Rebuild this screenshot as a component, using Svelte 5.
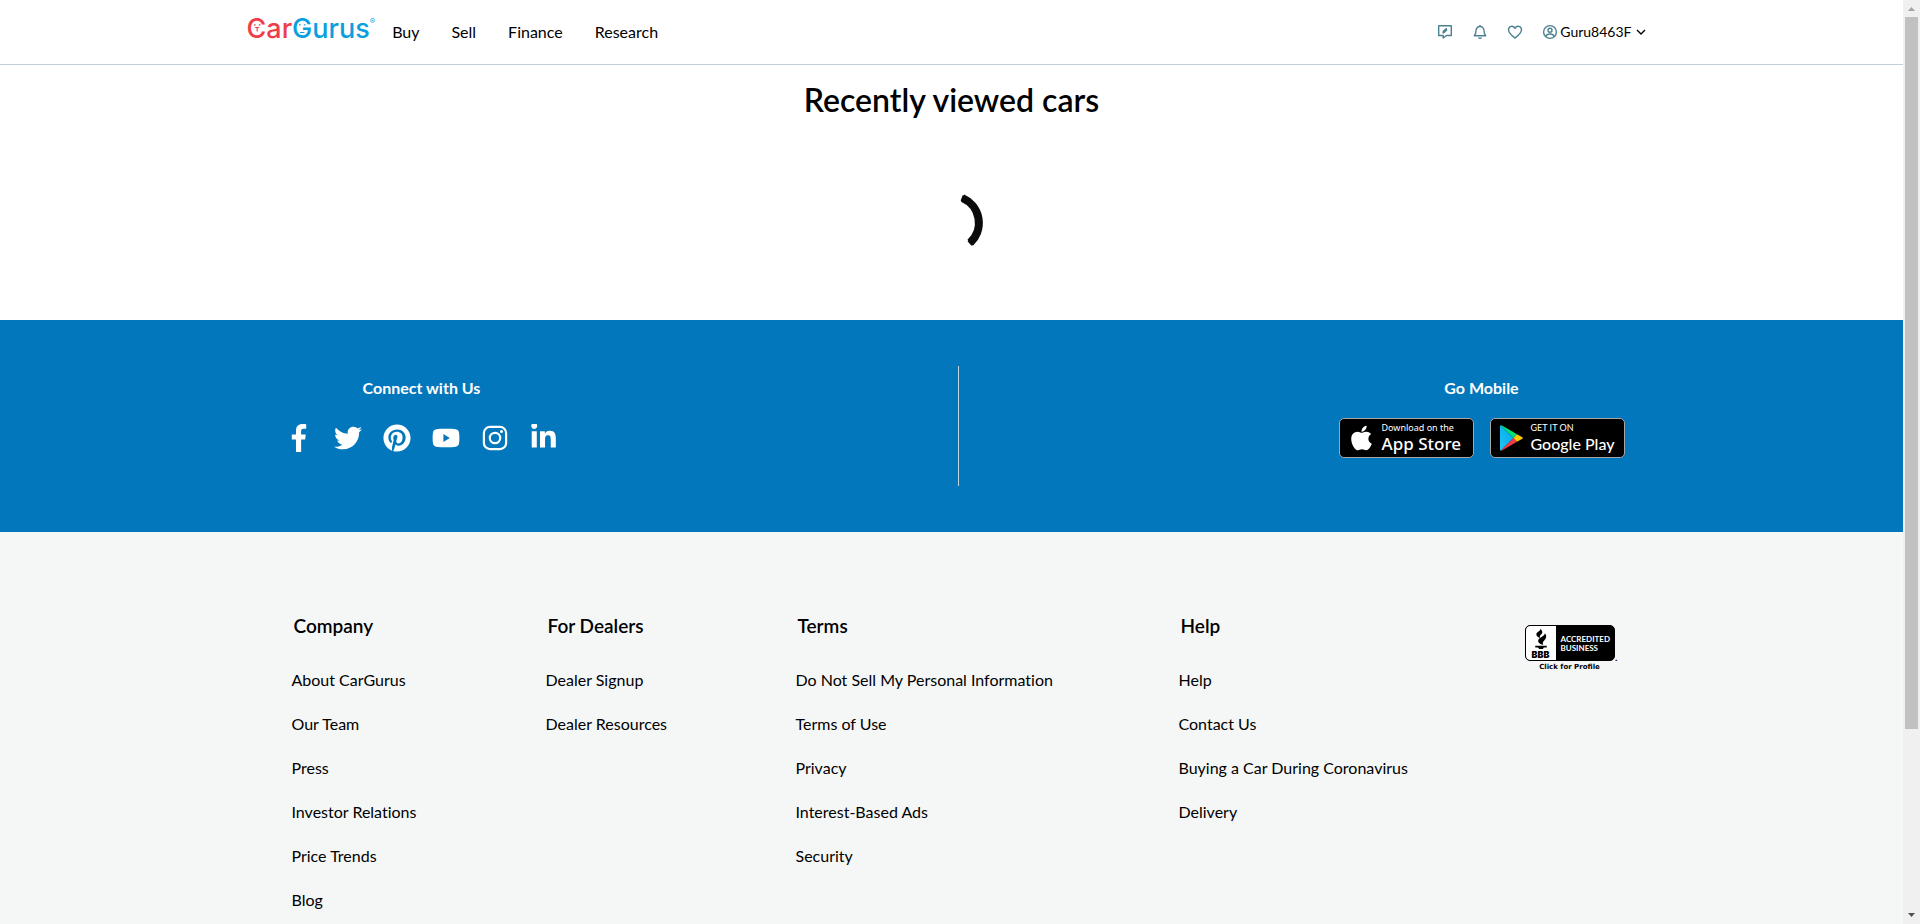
<script>
  const nav = ['Buy', 'Sell', 'Finance', 'Research'];

  const columns = [
    { title: 'Company', links: ['About CarGurus', 'Our Team', 'Press', 'Investor Relations', 'Price Trends', 'Blog'] },
    { title: 'For Dealers', links: ['Dealer Signup', 'Dealer Resources'] },
    { title: 'Terms', links: ['Do Not Sell My Personal Information', 'Terms of Use', 'Privacy', 'Interest-Based Ads', 'Security'] },
    { title: 'Help', links: ['Help', 'Contact Us', 'Buying a Car During Coronavirus', 'Delivery'] }
  ];

  const socials = [
    { name: 'Facebook', box: '-124 0 512 512', size: 28, d: 'M215.8 85H264V3.6C255.7 2.5 227.1 0 193.8 0 124.3 0 76.7 42.4 76.7 120.3V192H0v91h76.7v229h94V283h73.6l11.7-91h-85.3v-62.7c0-26.3 7.3-44.3 45.1-44.3z' },
    { name: 'Twitter', box: '0 0 512 512', size: 28, d: 'M459.37 151.716c.325 4.548.325 9.097.325 13.645 0 138.72-105.583 298.558-298.558 298.558-59.452 0-114.68-17.219-161.137-47.106 8.447.974 16.568 1.299 25.34 1.299 49.055 0 94.213-16.568 130.274-44.832-46.132-.975-84.792-31.188-98.112-72.772 6.498.974 12.995 1.624 19.818 1.624 9.421 0 18.843-1.3 27.614-3.573-48.081-9.747-84.143-51.98-84.143-102.985v-1.299c13.969 7.797 30.214 12.67 47.431 13.319-28.264-18.843-46.781-51.005-46.781-87.391 0-19.492 5.197-37.36 14.294-52.954 51.655 63.675 129.3 105.258 216.365 109.807-1.624-7.797-2.599-15.918-2.599-24.04 0-57.828 46.782-104.934 104.934-104.934 30.213 0 57.502 12.67 76.67 33.137 23.715-4.548 46.456-13.32 66.599-25.34-7.798 24.366-24.366 44.833-46.132 57.827 21.117-2.273 41.584-8.122 60.426-16.243-14.292 20.791-32.161 39.308-52.628 54.253z' },
    { name: 'Pinterest', box: '-8 0 512 512', size: 28, d: 'M496 256c0 137-111 248-248 248-25.6 0-50.2-3.9-73.4-11.1 10.1-16.5 25.2-43.5 30.8-65 3-11.6 15.4-59 15.4-59 8.1 15.4 31.7 28.5 56.8 28.5 74.8 0 128.7-68.8 128.7-154.3 0-81.9-66.9-143.2-152.9-143.2-107 0-163.9 71.8-163.9 150.1 0 36.4 19.4 81.7 50.3 96.1 4.7 2.2 7.2 1.2 8.3-3.3.8-3.4 5-20.3 6.9-28.1.6-2.5.3-4.7-1.7-7.1-10.1-12.5-18.3-35.3-18.3-56.6 0-54.7 41.4-107.6 112-107.6 60.9 0 103.6 41.5 103.6 100.9 0 67.1-33.9 113.6-78 113.6-24.3 0-42.6-20.1-36.7-44.8 7-29.5 20.5-61.3 20.5-82.6 0-19-10.2-34.9-31.4-34.9-24.9 0-44.9 25.7-44.9 60.2 0 22 7.4 36.8 7.4 36.8s-24.5 103.8-29 123.2c-5 21.4-3 51.6-.9 71.2C65.4 450.9 0 361.1 0 256 0 119 111 8 248 8s248 111 248 248z' },
    { name: 'YouTube', box: '0 0 28 28', size: 28, d: 'M14 4.800c4 0 7.600.1 9.700.5 2 .3 3 1.500 3.300 3.200.3 1.600.4 3.500.4 5.500s-.1 3.900-.4 5.500c-.3 1.700-1.300 2.900-3.300 3.200-2.100.4-5.700.5-9.700.5s-7.600-.1-9.700-.5c-2-.3-3-1.500-3.300-3.200C.7 17.900.6 16 .6 14s.1-3.900.4-5.500c.3-1.700 1.300-2.900 3.300-3.200C6.400 4.900 10 4.800 14 4.800zM11.400 10v8l6.400-4z' },
    { name: 'Instagram', box: '0 0 28 28', size: 28, d: 'M9 1.800h10a7.200 7.200 0 0 1 7.200 7.200v10a7.200 7.200 0 0 1-7.200 7.200H9A7.200 7.200 0 0 1 1.800 19V9A7.200 7.200 0 0 1 9 1.800zM9 4A5 5 0 0 0 4 9v10a5 5 0 0 0 5 5h10a5 5 0 0 0 5-5V9a5 5 0 0 0-5-5zM14 7.700a6.300 6.300 0 1 1 0 12.600 6.300 6.300 0 0 1 0-12.600zM14 9.900a4.100 4.100 0 1 0 0 8.200 4.100 4.100 0 0 0 0-8.200zM20.500 6a1.500 1.500 0 1 1 0 3 1.500 1.500 0 0 1 0-3z' },
    { name: 'LinkedIn', box: '-24 18 512 512', size: 28, d: 'M100.28 448H7.400V148.900h92.880zM53.790 108.100C24.090 108.100 0 83.500 0 53.800a53.790 53.790 0 0 1 107.580 0c0 29.700-24.100 54.300-53.790 54.300zM447.900 448h-92.680V302.400c0-34.700-.7-79.200-48.290-79.200-48.290 0-55.690 37.700-55.690 76.700V448h-92.780V148.900h89.080v40.800h1.300c12.400-23.500 42.690-48.300 87.880-48.300 94 0 111.280 61.900 111.280 142.300V448z' }
  ];
</script>

<div class="window">
  <div class="page">
    <header>
      <div class="bar">
        <a class="logo" href="#home" aria-label="CarGurus">
          <span class="red"><span class="face">C<svg viewBox="0 0 20 20" aria-hidden="true"><path d="M7 6.800h1.600M11.800 6.800h1.600M8.200 9.500h4M10.200 9.500v4" /></svg></span>ar</span><span class="blue"><span class="face">G<svg viewBox="0 0 20 20" aria-hidden="true"><path d="M7 6.800h1.600M11.800 6.800h1.600M8 14.500h4.500" /></svg></span>urus</span><sup>®</sup>
        </a>
        <nav>
          {#each nav as item}
            <a href="#{item.toLowerCase()}">{item}</a>
          {/each}
        </nav>
        <div class="tools">
          <button aria-label="Messages">
            <svg viewBox="0 0 16 16"><path d="M1.700 1.700h12.600v9.800H9.500L6.200 14v-2.500H1.700z" /><path d="M6 8.700l.4-1.500 3.300-3M5.600 9.200l1.500-.8 3-3" /></svg>
          </button>
          <button aria-label="Notifications">
            <svg viewBox="0 0 16 16"><path d="M2.300 11.800c1.400-1.200 1.700-2.400 1.700-5C4 4.400 5.700 2.500 8 2.500s4 1.900 4 4.300c0 2.600.3 3.800 1.700 5z" /><path d="M8 1v1.500M6.600 13.500c.4 1.100 2.400 1.100 2.800 0" /></svg>
          </button>
          <button aria-label="Saved cars">
            <svg viewBox="0 0 16 16"><path d="M8 14C5.500 12 1.500 9.300 1.500 5.800 1.500 2.200 6 .9 8 4.300c2-3.400 6.500-2.100 6.500 1.500C14.500 9.300 10.500 12 8 14z" /></svg>
          </button>
          <button class="account">
            <svg viewBox="0 0 16 16"><circle cx="8" cy="8" r="6.400" /><circle cx="8" cy="6.300" r="2" /><path d="M3.900 12.600c.4-1.900 1.500-2.600 4.100-2.600s3.700.7 4.100 2.600" /></svg>
            <span>Guru8463F</span>
            <svg class="chevron" viewBox="0 0 10 10"><path d="M1 3l4 4 4-4" /></svg>
          </button>
        </div>
      </div>
    </header>

    <main>
      <h1>Recently viewed cars</h1>
      <svg class="spinner" viewBox="0 0 64 64" role="img" aria-label="Loading">
        <path d="M41.700 6.800A27 27 0 0 1 49.500 52.500" stroke-width="6" />
        <path d="M42.600 7.200A27 27 0 0 1 50.200 51.800" stroke-width="8" />
      </svg>
    </main>

    <section class="connect">
      <div class="row">
        <div class="social">
          <h2>Connect with Us</h2>
          <ul>
            {#each socials as s}
              <li><a href="#{s.name.toLowerCase()}" aria-label={s.name}><svg viewBox={s.box} width={s.size} height={s.size}><path fill-rule="evenodd" d={s.d} /></svg></a></li>
            {/each}
          </ul>
        </div>
        <div class="divider"></div>
        <div class="mobile">
          <h2>Go Mobile</h2>
          <div class="stores">
            <a class="store apple" href="#app-store">
              <svg viewBox="0 20 384 470"><path fill="#fff" d="M318.700 268.700c-.2-36.700 16.400-64.400 50-84.800-18.800-26.900-47.200-41.700-84.700-44.600-35.500-2.800-74.300 20.700-88.500 20.700-15 0-49.400-19.700-76.400-19.700C63.300 141.200 4 184.800 4 273.500q0 39.300 14.400 81.200c12.800 36.700 59 126.700 107.200 125.200 25.200-.6 43-17.900 75.800-17.900 31.800 0 48.300 17.900 76.400 17.900 48.600-.7 90.400-82.500 102.600-119.300-65.200-30.700-61.700-90-61.700-91.900zm-56.600-164.200c27.300-32.400 24.800-61.900 24-72.500-24.100 1.400-52 16.400-67.900 34.900-17.500 19.800-27.800 44.300-25.600 71.900 26.100 2 49.900-11.400 69.500-34.300z" /></svg>
              <span><small>Download on the</small><b>App Store</b></span>
            </a>
            <a class="store google" href="#google-play">
              <svg viewBox="0 0 23 26">
                <defs><linearGradient id="play" x1="0" y1="1" x2="1" y2="0"><stop offset="0" stop-color="#1fc8f8" /><stop offset="1" stop-color="#00a3e8" /></linearGradient></defs>
                <path fill="url(#play)" d="M.7.300L13.500 13 .7 25.700Q0 25.500 0 24.500v-23Q0 .5.700.3z" />
                <path fill="#00e474" d="M.7.300q.6-.2 1.300.2L17 9.200 13.500 13z" />
                <path fill="#f53b48" d="M.7 25.700q.6.200 1.300-.2L17 16.800 13.500 13z" />
                <path fill="#ffc900" d="M17 9.200l5.300 3q1.200.8 0 1.600l-5.300 3L13.500 13z" />
              </svg>
              <span><small>GET IT ON</small><b>Google Play</b></span>
            </a>
          </div>
        </div>
      </div>
    </section>

    <footer>
      <div class="columns">
        {#each columns as col}
          <div>
            <h3>{col.title}</h3>
            <ul>
              {#each col.links as link}
                <li><a href="#{link.toLowerCase().replaceAll(' ', '-')}">{link}</a></li>
              {/each}
            </ul>
          </div>
        {/each}
        <a class="bbb" href="#bbb">
          <span class="seal">
            <span class="mark">
              <svg viewBox="0 0 14 22" aria-hidden="true"><path d="M6.500 0c2.600 2.500 2.200 4.200.6 5.800-1.400 1.300-1.700 2.200-.9 3.700C3.400 8.600 1.600 7 2.200 4.800 2.800 3 6 2.500 6.500 0zM11 4.500c2.300 2.600 1.700 5-.2 6.900-1.700 1.700-2.600 2.900-1.400 5.100-3.800-.5-6.200-2.900-5.100-5.300C5.500 8.700 10.700 8 11 4.500zM1 17.500h12v2h-3l-1 1.500H5l-1-1.500H1z" /></svg>
              <b>BBB</b>
            </span>
            <span class="label">ACCREDITED<br />BUSINESS</span>
          </span>
          <i>.</i>
          <span class="caption">Click for Profile</span>
        </a>
      </div>
    </footer>
  </div>

  <div class="scrollbar" aria-hidden="true">
    <svg viewBox="0 0 17 17"><path fill="#a3a3a3" d="M8.500 7l3.500 4H5z" /></svg>
    <div class="track"><div class="thumb"></div></div>
    <svg viewBox="0 0 17 17"><path fill="#505050" d="M8.500 10L12 6H5z" /></svg>
  </div>
</div>

<style>
  :global(body) { margin: 0; }
  .window {
    display: grid;
    grid-template-columns: minmax(0, 1fr) 17px;
    height: 100vh;
    overflow: hidden;
    font: 16px/24px Lato, sans-serif;
    font-variant-ligatures: none;
    color: #000;
    background: #fff;
  }
  .page { display: flex; flex-direction: column; overflow: hidden; }
  a { color: inherit; text-decoration: none; }
  ul { list-style: none; margin: 0; padding: 0; }
  h1, h2, h3 { margin: 0; }
  svg { display: block; }

  header { border-bottom: 1px solid #c1cfd9; }
  .bar {
    display: flex;
    align-items: center;
    box-sizing: border-box;
    max-width: 1410px;
    height: 64px;
    margin: 0 auto;
    padding-right: 11px;
  }
  .logo {
    display: flex;
    font: 500 27px/28px Inter, sans-serif;
    padding-bottom: 6px;
  }
  .red { color: #ef3e4a; }
  .blue { color: #0aa0dd; }
  .face { position: relative; }
  .face svg {
    position: absolute;
    left: 0;
    top: 6px;
    width: 20px;
    height: 20px;
    fill: none;
    stroke: currentColor;
    stroke-width: 1.200;
  }
  .logo sup { font: 8px/12px Inter, sans-serif; color: #0aa0dd; }
  nav { display: flex; gap: 32px; margin-left: 17px; }
  .tools { display: flex; align-items: center; gap: 19px; margin-left: auto; }
  button {
    display: flex;
    align-items: center;
    border: 0;
    padding: 0;
    background: none;
    color: #4e8190;
    font: 14px/20px Lato, sans-serif;
  }
  button svg {
    width: 16px;
    height: 16px;
    fill: none;
    stroke: currentColor;
    stroke-width: 1.400;
    stroke-linejoin: round;
  }
  .account { gap: 2px; }
  .account span { color: #000; }
  .account .chevron { width: 10px; height: 10px; margin-left: 2px; color: #000; }

  main { display: flex; flex-direction: column; align-items: center; padding: 15px 0 65px; }
  h1 { font-size: 32px; line-height: 40px; font-weight: 600; }
  .spinner { width: 64px; height: 64px; margin-top: 71px; fill: none; stroke: #0b0b0b; }

  .connect { background: #0277bc; color: #fff; padding: 46px 0; }
  .row { display: flex; justify-content: space-between; max-width: 1354px; margin: 0 auto; }
  .divider { width: 1px; height: 120px; background: #c3d3df; }
  .connect h2 { font-size: 16px; line-height: 24px; font-weight: 700; text-align: center; }
  .social, .mobile { width: 294px; padding-top: 10px; }
  .social { padding-right: 14px; }
  .social ul { display: flex; justify-content: space-around; margin-top: 24px; fill: #fff; }
  .stores { display: flex; justify-content: center; gap: 16px; margin-top: 18px; }
  .store {
    display: flex;
    align-items: center;
    box-sizing: border-box;
    width: 135px;
    height: 40px;
    border: 1px solid #a6a6a6;
    border-radius: 5px;
    background: #000;
  }
  .store span { display: flex; flex-direction: column; white-space: nowrap; }
  .apple { padding-left: 11px; gap: 10px; font-family: "Noto Sans", sans-serif; }
  .apple svg { width: 21px; height: 26px; }
  .google { padding-left: 9px; gap: 8px; }
  .google svg { width: 23px; height: 26px; }
  .store small { font-size: 9px; line-height: 12px; }
  .store b { font-size: 17px; line-height: 20px; font-weight: 500; }
  .google b { font-size: 16px; }

  footer { flex: 1; background: #f5f7f7; padding-top: 80px; }
  .columns {
    display: grid;
    grid-template-columns: 254fr 250fr 383fr 346fr 93fr;
    max-width: 1326px;
    margin: 0 auto;
    padding-left: 6px;
  }
  h3 { font-size: 19px; line-height: 28px; font-weight: 600; padding-left: 2px; margin-bottom: 18px; }
  li a { white-space: nowrap; }
  .columns li { padding: 10px 0; }

  .bbb { position: relative; width: 93px; padding-top: 13px; }
  .seal {
    display: flex;
    box-sizing: border-box;
    width: 90px;
    height: 36px;
    border: 1px solid #000;
    border-radius: 5px;
    overflow: hidden;
    background: #000;
  }
  .mark { display: flex; flex-direction: column; align-items: center; width: 30px; background: #fff; padding-top: 3px; border-radius: 4px 0 0 4px; }
  .mark svg { width: 14px; height: 21px; }
  .mark b { font: 900 9px/9px Inter, sans-serif; }
  .label { flex: 1; padding: 9px 0 0 5px; font: 700 8px/9px Lato, sans-serif; color: #fff; }
  .bbb i { position: absolute; right: 0; top: 39px; font: 700 10px/12px Lato, sans-serif; }
  .caption { display: block; width: 90px; text-align: center; white-space: nowrap; font: 700 7px/12px "DejaVu Sans", sans-serif; }

  .scrollbar { display: flex; flex-direction: column; background: #f0f0f0; }
  .scrollbar svg { width: 17px; height: 17px; }
  .track { flex: 1; padding: 0 2px; }
  .thumb { height: 80%; background: #c1c1c1; }
</style>
